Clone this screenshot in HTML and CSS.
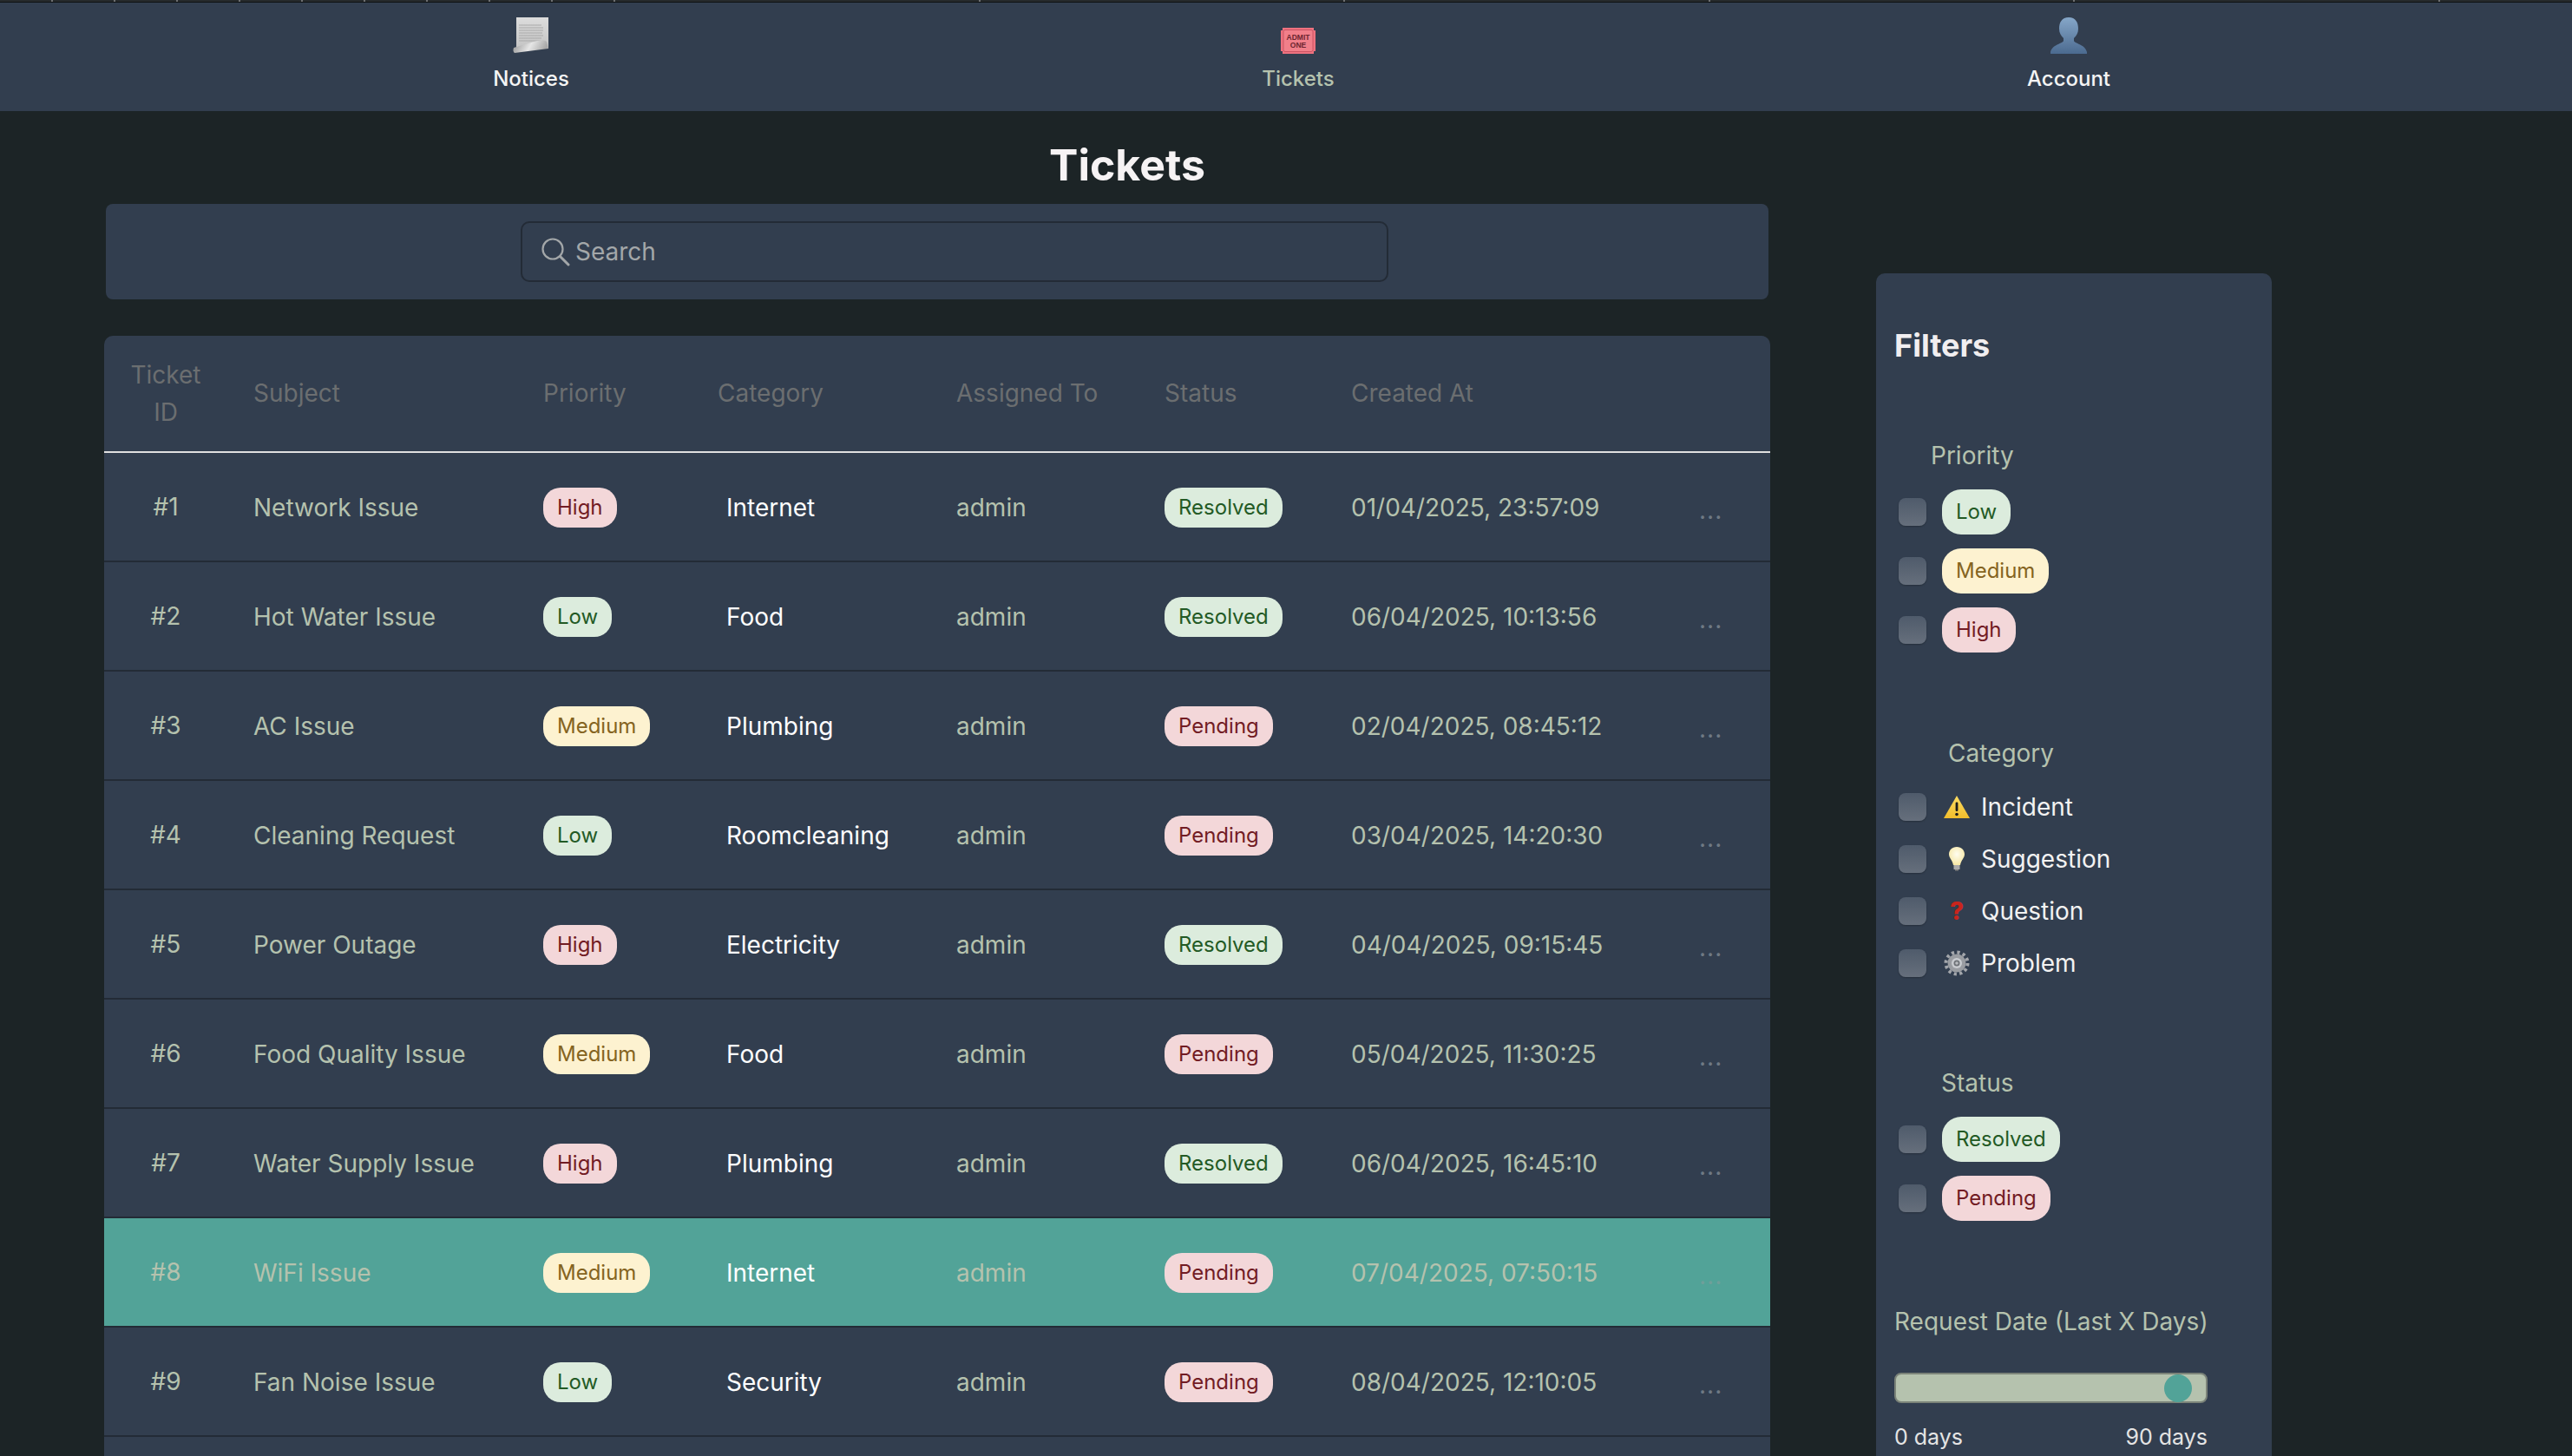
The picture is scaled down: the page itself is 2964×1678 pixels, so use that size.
FILE: index.html
```html
<!DOCTYPE html>
<html lang="en">
<head>
<meta charset="utf-8">
<title>Tickets</title>
<link rel="stylesheet" href="styles.css">
</head>
<body>
<div class="top-strip">
  <span class="tick tick-s"></span><span class="tick tick-s"></span><span class="tick tick-s"></span><span class="tick tick-s"></span><span class="tick tick-s"></span><span class="tick tick-s"></span><span class="tick tick-s"></span><span class="tick tick-s"></span><span class="tick tick-s"></span>
  <span class="tick tick-l"></span><span class="tick tick-l"></span><span class="tick tick-l"></span><span class="tick tick-l"></span><span class="tick tick-l"></span><span class="tick tick-l"></span>
</div>
<nav class="nav">
  <a class="nav-item">
    <svg class="nav-icon" width="46" height="44" viewBox="0 0 46 44">
      <defs>
        <linearGradient id="paper" x1="0" y1="0" x2="0" y2="1"><stop offset="0" stop-color="#dcdcdc"/><stop offset="1" stop-color="#c4c4c4"/></linearGradient>
        <linearGradient id="curl" x1="0" y1="0" x2="1" y2="0.2"><stop offset="0" stop-color="#8f8f8f"/><stop offset="0.55" stop-color="#e6e6e6"/><stop offset="1" stop-color="#a8a8a8"/></linearGradient>
      </defs>
      <rect x="6" y="1" width="37" height="36" fill="url(#paper)"/>
      <g stroke="#a9a9a9" stroke-width="1"><path d="M9 10h26M9 13h28M9 16h28M9 19h27M9 22h28M9 25h26M9 28h25"/></g>
      <path d="M3 36 L30 28 Q39 26 41 29 L43 37 L4 42 Q1.500 40 3 36Z" fill="url(#curl)"/>
    </svg>
    <span>Notices</span>
  </a>
  <a class="nav-item nav-tickets is-active">
    <svg class="nav-icon" width="44" height="32" viewBox="0 0 44 32">
      <path d="M4 1H40V4H42V28H40V31H4V28H2V4H4Z" fill="#ee727f"/>
      <rect x="5" y="3.500" width="34" height="25" rx="2" fill="#f17f8a" stroke="#cb5463" stroke-width="1"/>
      <text class="ticket-text" x="22" y="14.500">ADMIT</text>
      <text class="ticket-text" x="22" y="24">ONE</text>
    </svg>
    <span>Tickets</span>
  </a>
  <a class="nav-item nav-account">
    <svg class="nav-icon" width="44" height="44" viewBox="0 0 44 44">
      <defs><linearGradient id="person" x1="0" y1="0" x2="0" y2="1"><stop offset="0" stop-color="#86a7c9"/><stop offset="1" stop-color="#4b6a8f"/></linearGradient></defs>
      <path d="M22 1C14 1 11 7 11 14C11 19 13 22 16 25V28C16 31 3 32 1 41V43H43V41C41 32 28 31 28 28V25C31 22 33 19 33 14C33 7 30 1 22 1Z" fill="url(#person)"/>
    </svg>
    <span>Account</span>
  </a>
</nav>

<h1 class="page-title">Tickets</h1>

<main class="layout">
  <section class="content">
    <div class="search-card">
      <div class="search-box">
        <svg width="34" height="34" viewBox="0 0 34 34" fill="none" stroke="#a3a7a9" stroke-width="2.200"><circle cx="14" cy="14" r="11.500"/><path d="M22.500 22.500L32 32" stroke-width="3" stroke-linecap="round"/></svg>
        <span class="search-placeholder">Search</span>
      </div>
    </div>

    <div class="table-card">
      <table class="tickets">
        <colgroup>
          <col class="c-id"><col class="c-subject"><col class="c-priority"><col class="c-category"><col class="c-assigned"><col class="c-status"><col class="c-created"><col class="c-more">
        </colgroup>
        <thead>
          <tr><th class="cell-id">Ticket ID</th><th>Subject</th><th>Priority</th><th>Category</th><th>Assigned To</th><th>Status</th><th>Created At</th><th></th></tr>
        </thead>
        <tbody>
          <tr><td class="cell-id">#1</td><td>Network Issue</td><td><span class="badge bad">High</span></td><td class="cell-cat">Internet</td><td>admin</td><td><span class="badge good">Resolved</span></td><td>01/04/2025, 23:57:09</td><td class="cell-more">...</td></tr>
          <tr><td class="cell-id">#2</td><td>Hot Water Issue</td><td><span class="badge good">Low</span></td><td class="cell-cat">Food</td><td>admin</td><td><span class="badge good">Resolved</span></td><td>06/04/2025, 10:13:56</td><td class="cell-more">...</td></tr>
          <tr><td class="cell-id">#3</td><td>AC Issue</td><td><span class="badge warn">Medium</span></td><td class="cell-cat">Plumbing</td><td>admin</td><td><span class="badge bad">Pending</span></td><td>02/04/2025, 08:45:12</td><td class="cell-more">...</td></tr>
          <tr><td class="cell-id">#4</td><td>Cleaning Request</td><td><span class="badge good">Low</span></td><td class="cell-cat">Roomcleaning</td><td>admin</td><td><span class="badge bad">Pending</span></td><td>03/04/2025, 14:20:30</td><td class="cell-more">...</td></tr>
          <tr><td class="cell-id">#5</td><td>Power Outage</td><td><span class="badge bad">High</span></td><td class="cell-cat">Electricity</td><td>admin</td><td><span class="badge good">Resolved</span></td><td>04/04/2025, 09:15:45</td><td class="cell-more">...</td></tr>
          <tr><td class="cell-id">#6</td><td>Food Quality Issue</td><td><span class="badge warn">Medium</span></td><td class="cell-cat">Food</td><td>admin</td><td><span class="badge bad">Pending</span></td><td>05/04/2025, 11:30:25</td><td class="cell-more">...</td></tr>
          <tr><td class="cell-id">#7</td><td>Water Supply Issue</td><td><span class="badge bad">High</span></td><td class="cell-cat">Plumbing</td><td>admin</td><td><span class="badge good">Resolved</span></td><td>06/04/2025, 16:45:10</td><td class="cell-more">...</td></tr>
          <tr class="is-selected"><td class="cell-id">#8</td><td>WiFi Issue</td><td><span class="badge warn">Medium</span></td><td class="cell-cat">Internet</td><td>admin</td><td><span class="badge bad">Pending</span></td><td>07/04/2025, 07:50:15</td><td class="cell-more">...</td></tr>
          <tr><td class="cell-id">#9</td><td>Fan Noise Issue</td><td><span class="badge good">Low</span></td><td class="cell-cat">Security</td><td>admin</td><td><span class="badge bad">Pending</span></td><td>08/04/2025, 12:10:05</td><td class="cell-more">...</td></tr>
        </tbody>
      </table>
      <div class="table-rest"></div>
    </div>
  </section>

  <aside class="filters">
    <h2 class="filters-title">Filters</h2>

    <div class="group group-first">
      <div class="legend legend-priority">Priority</div>
      <div class="options options-badges">
        <label class="option"><input type="checkbox"><span class="badge badge-lg good">Low</span></label>
        <label class="option"><input type="checkbox"><span class="badge badge-lg warn">Medium</span></label>
        <label class="option"><input type="checkbox"><span class="badge badge-lg bad">High</span></label>
      </div>
    </div>

    <div class="group">
      <div class="legend legend-category">Category</div>
      <div class="options options-text">
        <label class="option"><input type="checkbox">
          <svg class="cat-icon" width="30" height="28" viewBox="0 0 30 28">
            <defs><linearGradient id="warn" x1="0" y1="0" x2="0" y2="1"><stop offset="0" stop-color="#fbdc62"/><stop offset="1" stop-color="#f2bd2c"/></linearGradient></defs>
            <path d="M15 1L30 27H0Z" fill="url(#warn)"/>
            <rect x="13.600" y="8.500" width="2.800" height="10.500" rx="1.200" fill="#1c1c1c"/>
            <circle cx="15" cy="22.500" r="1.800" fill="#1c1c1c"/>
          </svg>
          <span>Incident</span></label>
        <label class="option"><input type="checkbox">
          <svg class="cat-icon" width="30" height="28" viewBox="0 0 30 28">
            <defs><radialGradient id="bulb" cx="0.5" cy="0.4" r="0.6"><stop offset="0" stop-color="#fffdf0"/><stop offset="1" stop-color="#f6e7a4"/></radialGradient></defs>
            <path d="M15 0C9.500 0 6 4 6 8.500C6 13 10 15 11 21H19C20 15 24 13 24 8.500C24 4 20.500 0 15 0Z" fill="url(#bulb)"/>
            <rect x="11.500" y="21" width="7" height="5" fill="#a9a9a9"/>
            <rect x="13" y="26" width="4" height="1.500" fill="#7e7e7e"/>
          </svg>
          <span>Suggestion</span></label>
        <label class="option"><input type="checkbox">
          <span class="cat-icon cat-question">?</span>
          <span>Question</span></label>
        <label class="option"><input type="checkbox">
          <svg class="cat-icon" width="30" height="30" viewBox="0 0 30 30">
            <circle cx="15" cy="15" r="12.500" fill="none" stroke="#a3a6ab" stroke-width="4" stroke-dasharray="3.200 3.345"/>
            <circle cx="15" cy="15" r="10.500" fill="#9a9da2"/>
            <circle cx="15" cy="15" r="6" fill="#c9ccd0"/>
            <circle cx="15" cy="15" r="3.500" fill="#6e7277"/>
            <circle cx="15" cy="15" r="1.800" fill="#b9bcc0"/>
          </svg>
          <span>Problem</span></label>
      </div>
    </div>

    <div class="group">
      <div class="legend legend-status">Status</div>
      <div class="options options-badges">
        <label class="option"><input type="checkbox"><span class="badge badge-lg good">Resolved</span></label>
        <label class="option"><input type="checkbox"><span class="badge badge-lg bad">Pending</span></label>
      </div>
    </div>

    <div class="group">
      <div class="legend">Request Date (Last X Days)</div>
      <div class="slider"><span class="slider-thumb"></span></div>
      <div class="slider-labels"><span>0 days</span><span>90 days</span></div>
    </div>
  </aside>
</main>
</body>
</html>
```
FILE: styles.css
```css
* { box-sizing: border-box; }
html, body { height: 100%; overflow: hidden; }
body {
  margin: 0;
  background: #1c2426;
  color: #b5c2ae;
  font-family: Inter, "Noto Sans", sans-serif;
  font-size: 28px;
}

/* top strip */
.top-strip {
  display: flex;
  height: 3px;
  padding-left: 59px;
  background: #0e1112;
  border-top: 2px solid #262a2c;
  margin-top: 0;
}
.tick { flex: none; height: 2px; margin-top: -2px; border-left: 2px solid #6e7072; }
.tick-s { width: 72px; }
.tick-l { width: 420.5px; }

/* nav */
.nav {
  display: flex;
  height: 125px;
  padding-left: 532px;
  background: #323e4f;
}
.nav-item {
  display: flex;
  flex-direction: column;
  align-items: center;
  justify-content: flex-end;
  width: 160px;
  height: 103px;
  color: #f4f4f4;
  font-size: 24px;
  font-weight: 500;
  line-height: 30px;
}
.nav-icon { display: block; margin-bottom: 13px; }
.nav-item.is-active { color: #b5c2ae; }
.nav-tickets { margin-left: 724px; }
.nav-account { margin-left: 728px; }
.ticket-text {
  font-family: "Liberation Sans", sans-serif;
  font-size: 8.500px;
  font-weight: 700;
  text-anchor: middle;
  fill: #6c2530;
}

/* title */
.page-title {
  width: 2598px;
  height: 107px;
  margin: 0;
  padding-top: 17px;
  color: #f6f3f4;
  font-size: 50px;
  font-weight: 700;
  line-height: 90px;
  text-align: center;
}

/* layout */
.layout {
  display: flex;
  align-items: flex-start;
  padding-left: 120px;
}
.content { flex: none; width: 1920px; }

/* search */
.search-card {
  height: 110px;
  margin: 0 2px;
  padding: 20px 0 0 478px;
  background: #323e4f;
  border-radius: 8px;
}
.search-box {
  display: flex;
  align-items: center;
  gap: 6px;
  width: 1000px;
  height: 70px;
  padding-left: 21px;
  border: 2px solid #232b36;
  border-radius: 10px;
}
.search-placeholder { color: #a3a7a9; font-size: 28px; }

/* table */
.table-card {
  margin-top: 42px;
  background: #323e4f;
  border-radius: 10px 10px 0 0;
  overflow: hidden;
}
.tickets {
  width: 1920px;
  table-layout: fixed;
  border-collapse: collapse;
}
.c-id { width: 142px; }
.c-subject { width: 334px; }
.c-priority { width: 201px; }
.c-category { width: 275px; }
.c-assigned { width: 240px; }
.c-status { width: 215px; }
.c-created { width: 401px; }
.c-more { width: 112px; }
.tickets th {
  height: 134px;
  padding: 0 0 0 30px;
  border-bottom: 2px solid #e0e0e0;
  color: #6b6e70;
  font-weight: 400;
  line-height: 43px;
  text-align: left;
}
.tickets td {
  height: 126px;
  padding: 2px 0 0 30px;
  border-bottom: 2px solid #232b36;
  line-height: 34px;
}
.tickets .cell-id { padding: 0 30px; text-align: center; }
.tickets td.cell-cat { padding-left: 40px; color: #ffffff; }
.tickets td.cell-more { padding-top: 8px; color: #6f7984; letter-spacing: 1px; }
.is-selected td { background: #52a398; }
.tickets .is-selected td.cell-more { color: #6f9f9a; }
.table-rest { height: 120px; }

/* badges */
.badge {
  display: inline-block;
  height: 46px;
  padding: 0 16px;
  border-radius: 20px;
  font-size: 24px;
  line-height: 46px;
  vertical-align: middle;
}
.badge-lg { height: 52px; line-height: 52px; border-radius: 22px; }
.good { background: #dcecdd; color: #235a25; }
.warn { background: #fdf2d0; color: #856421; }
.bad { background: #f3d7d9; color: #721c24; }

/* filters */
.filters {
  flex: none;
  width: 456px;
  height: 1400px;
  margin: 80px 0 0 122px;
  padding: 61px 21px 0;
  background: #323e4f;
  border-radius: 10px 10px 0 0;
}
.filters-title {
  margin: 0;
  color: #f1eef0;
  font-size: 36px;
  font-weight: 700;
  line-height: 44px;
}
.group { margin-top: 95px; }
.group-first { margin-top: 84px; }
.legend { line-height: 42px; color: #b5c2ae; }
.legend-priority { margin-left: 42px; }
.legend-category { margin-left: 62px; }
.legend-status { margin-left: 54px; }
.options { display: flex; flex-direction: column; margin-top: 18px; padding-left: 5px; }
.options-badges { gap: 16px; }
.options-text { gap: 16px; margin-top: 19px; color: #f2f2f2; }
.option { display: flex; align-items: center; height: 52px; }
.options-text .option { height: 44px; }
.option input {
  appearance: none;
  flex: none;
  width: 32px;
  height: 32px;
  margin: 0 18px 0 0;
  border-radius: 8px;
  background: linear-gradient(#4f5b6b, #666f7c);
  box-shadow: 0 1px 2px rgba(0,0,0,.25);
}
.options-text .option input { margin-right: 20px; }
.cat-icon { flex: none; width: 30px; margin-right: 13px; }
.cat-question {
  color: #c9251d;
  font-size: 28px;
  font-weight: 800;
  line-height: 30px;
  text-align: center;
}

/* slider */
.slider {
  position: relative;
  width: 361px;
  height: 35px;
  margin-top: 38px;
  background: #b5c2ae;
  border: 2px solid #7b8379;
  border-radius: 8px;
}
.slider-thumb {
  position: absolute;
  top: 0;
  left: 309px;
  width: 32px;
  height: 32px;
  border-radius: 50%;
  background: #52a398;
}
.slider-labels {
  display: flex;
  justify-content: space-between;
  width: 361px;
  margin-top: 20px;
  color: #e4e4e4;
  font-size: 25px;
  line-height: 38px;
}
```
